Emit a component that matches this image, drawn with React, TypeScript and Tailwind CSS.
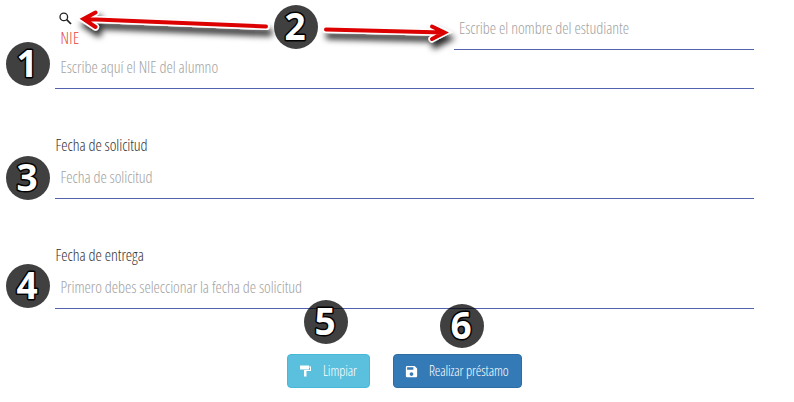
import type { ReactNode } from "react";
import { MdSave } from "react-icons/md";

function Field({ text, className }: { text: string; className: string }) {
  return (
    <div className={`flex items-center border-b border-[#5262ae] text-[#a2a2a2] ${className}`}>
      <span className="whitespace-nowrap">{text}</span>
    </div>
  );
}

function Badge({ n, className }: { n: number; className: string }) {
  return (
    <svg className={`absolute size-11 overflow-visible ${className}`} viewBox="0 0 44 44">
      <circle cx="22" cy="22" r="22" fill="#000" fillOpacity="0.75" />
      <text
        x="21.200"
        y="35"
        textAnchor="middle"
        className="font-['Open_Sans',sans-serif] text-[37px] leading-none font-bold font-stretch-95%"
        fill="#fff"
        stroke="#000"
        strokeWidth="3"
        strokeLinejoin="round"
        paintOrder="stroke"
      >
        {n}
      </text>
    </svg>
  );
}

function Button({ icon, children, className }: { icon: ReactNode; children: ReactNode; className: string }) {
  return (
    <button className={`flex h-[34px] items-center rounded border text-[14px] font-[350] tracking-[-0.100px] text-white ${className}`}>
      {icon}
      <span className="ml-[10px] whitespace-nowrap">{children}</span>
    </button>
  );
}

function SearchIcon() {
  return (
    <svg className="h-4 w-4" viewBox="0 0 16 16" fill="none" stroke="#222">
      <circle cx="4.800" cy="5.900" r="3.800" strokeWidth="1.300" />
      <path d="M7.700 8.700 12 13" strokeWidth="1.700" />
    </svg>
  );
}

function PaintIcon() {
  return (
    <svg className="size-[14px]" viewBox="0 0 14 14" fill="#fff">
      <path d="M1 1.500h9v1h2v4.500H7.500V12.500H5V6h6V3.500H10v2H1z" />
    </svg>
  );
}

function Arrows() {
  return (
    <svg className="absolute inset-0 h-[100px] w-[794px]" viewBox="0 0 794 100" fill="none" strokeLinecap="round" strokeLinejoin="miter">
      <defs>
        <filter id="shadow" filterUnits="userSpaceOnUse" x="60" y="0" width="420" height="70">
          <feDropShadow dx="3" dy="6" stdDeviation="3" floodColor="#000" floodOpacity="0.85" />
        </filter>
      </defs>
      <g filter="url(#shadow)">
        <g stroke="#fff" strokeWidth="7">
          <path d="M266 26.500 84 19M95.500 12.500 83.500 19l12 8" />
          <path d="M326 29.500 443 32.500M432 26.500l12.500 6-12.500 6.500" />
        </g>
      </g>
      <g stroke="#dc0000" strokeWidth="4">
        <path d="M266 26.500 84 19M95.500 12.500 83.500 19l12 8" />
        <path d="M326 29.500 443 32.500M432 26.500l12.500 6-12.500 6.500" />
      </g>
    </svg>
  );
}

export default function App() {
  return (
    <div className="relative h-[402px] w-[794px] overflow-hidden bg-white font-['Open_Sans',sans-serif] text-[16px] leading-5 font-light font-stretch-condensed text-[#333]">
      <main className="flex flex-col pr-10 pl-[55px]">
        <div className="flex h-[50px] justify-between">
          <div className="flex flex-col pt-[11px] pl-1">
            <SearchIcon />
            <span className="mt-px pl-[1.500px] tracking-[0.400px] text-[#e5443c]">NIE</span>
          </div>
          <Field text="Escribe el nombre del estudiante" className="w-[300px] pt-[6px] pl-[5px] tracking-[-0.040px]" />
        </div>
        <Field text="Escribe aquí el NIE del alumno" className="h-[39px] pb-1 pl-[5.500px] tracking-[-0.020px]" />
        <label className="mt-[46px] pl-[0.500px] tracking-[-0.060px]">Fecha de solicitud</label>
        <Field text="Fecha de solicitud" className="h-11 pl-[5.500px] tracking-[-0.060px]" />
        <label className="mt-[46px] pl-[0.500px] tracking-[-0.040px]">Fecha de entrega</label>
        <Field text="Primero debes seleccionar la fecha de solicitud" className="h-11 pl-[5.500px] tracking-[-0.050px]" />
        <div className="mt-[45px] flex gap-[23px] pl-[232px]">
          <Button icon={<PaintIcon />} className="w-[83px] border-[#46b8da] bg-[#5bc0de] pl-[11px]">
            Limpiar
          </Button>
          <Button icon={<MdSave className="size-[15px]" />} className="w-[129px] border-[#2e6da4] bg-[#337ab7] pl-[10px]">
            Realizar préstamo
          </Button>
        </div>
      </main>
      <Arrows />
      <Badge n={1} className="top-[42px] left-[6px]" />
      <Badge n={2} className="top-[5px] left-[274px]" />
      <Badge n={3} className="top-[156px] left-[6px]" />
      <Badge n={4} className="top-[264px] left-[6px]" />
      <Badge n={5} className="top-[300px] left-[304px]" />
      <Badge n={6} className="top-[304px] left-[440px]" />
    </div>
  );
}
